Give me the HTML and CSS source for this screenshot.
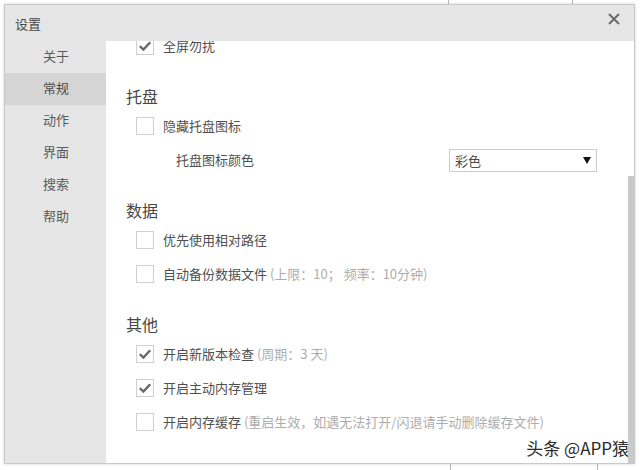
FILE: index.html
```html
<!DOCTYPE html>
<html lang="zh-CN">
<head>
<meta charset="utf-8">
<title>设置</title>
<link rel="stylesheet" href="styles.css">
</head>
<body>
<div class="desk-line desk-line-t1"></div>
<div class="desk-line desk-line-t2"></div>
<div class="desk-line desk-line-b1"></div>
<div class="desk-line desk-line-b2"></div>
<div class="window">
  <div class="titlebar">
    <span class="title">设置</span>
    <svg class="close" width="12" height="12" viewBox="0 0 12 12"><path d="M1 1 L11 11 M11 1 L1 11" stroke="#6a6a6a" stroke-width="2" fill="none"/></svg>
  </div>
  <div class="main">
    <ul class="sidebar">
      <li class="nav-item">关于</li>
      <li class="nav-item active">常规</li>
      <li class="nav-item">动作</li>
      <li class="nav-item">界面</li>
      <li class="nav-item">搜索</li>
      <li class="nav-item">帮助</li>
    </ul>
    <div class="content">
      <div class="scroller">
        <div class="row">
          <span class="cb checked"><svg viewBox="0 0 18 18" width="18" height="18"><path d="M3.8 9.2 L7.4 12.6 L14.2 5.2" stroke="#686868" stroke-width="2.4" fill="none"/></svg></span>
          <span class="label">全屏勿扰</span>
        </div>

        <h3 class="section">托盘</h3>
        <div class="row">
          <span class="cb"></span>
          <span class="label">隐藏托盘图标</span>
        </div>
        <div class="row sub-row">
          <span class="label sub-label">托盘图标颜色</span>
          <div class="select"><span>彩色</span><i class="arrow"></i></div>
        </div>

        <h3 class="section">数据</h3>
        <div class="row">
          <span class="cb"></span>
          <span class="label">优先使用相对路径</span>
        </div>
        <div class="row">
          <span class="cb"></span>
          <span class="label">自动备份数据文件 <em class="hint">(上限：10；&nbsp;频率：10分钟)</em></span>
        </div>

        <h3 class="section">其他</h3>
        <div class="row">
          <span class="cb checked"><svg viewBox="0 0 18 18" width="18" height="18"><path d="M3.8 9.2 L7.4 12.6 L14.2 5.2" stroke="#686868" stroke-width="2.4" fill="none"/></svg></span>
          <span class="label">开启新版本检查 <em class="hint">(周期：3 天)</em></span>
        </div>
        <div class="row">
          <span class="cb checked"><svg viewBox="0 0 18 18" width="18" height="18"><path d="M3.8 9.2 L7.4 12.6 L14.2 5.2" stroke="#686868" stroke-width="2.4" fill="none"/></svg></span>
          <span class="label">开启主动内存管理</span>
        </div>
        <div class="row">
          <span class="cb"></span>
          <span class="label">开启内存缓存 <em class="hint">(重启生效，如遇无法打开/闪退请手动删除缓存文件)</em></span>
        </div>
      </div>
      <div class="thumb"></div>
    </div>
  </div>
  <div class="watermark">头条 @APP猿</div>
</div>
</body>
</html>
```

FILE: styles.css
```css
* { box-sizing: border-box; }
html, body {
  margin: 0;
  padding: 0;
  background: #ffffff;
  width: 640px;
  height: 470px;
  overflow: hidden;
  font-family: "Noto Sans CJK SC", "Noto Sans", "Liberation Sans", sans-serif;
  position: relative;
}

.desk-line {
  position: absolute;
  width: 1px;
  background: #b8b8b8;
}
.desk-line-t1 { left: 448px; top: 0; height: 5px; }
.desk-line-t2 { left: 572px; top: 0; height: 5px; }
.desk-line-b1 { left: 450px; top: 463px; height: 7px; }
.desk-line-b2 { left: 597px; top: 463px; height: 7px; }

.window {
  position: absolute;
  left: 4px;
  top: 4px;
  width: 631px;
  height: 460px;
  border: 1px solid #c9c9c9;
  box-shadow: 0 0 3px rgba(0,0,0,0.18);
  background: #ffffff;
  display: flex;
  flex-direction: column;
}

.titlebar {
  height: 36px;
  flex: none;
  background: #e6e6e6;
  display: flex;
  align-items: center;
  justify-content: space-between;
  padding: 0 14px 0 10px;
}
.title {
  font-size: 13px;
  line-height: 16px;
  color: #4a4a4a;
  margin-top: 1px;
}
.close {
  display: block;
  margin-top: -8px;
}

.main {
  flex: 1;
  display: flex;
  min-height: 0;
}

.sidebar {
  list-style: none;
  margin: 0;
  padding: 0;
  width: 101px;
  flex: none;
  background: #e6e6e6;
}
.nav-item {
  height: 32px;
  display: flex;
  align-items: center;
  justify-content: center;
  font-size: 13px;
  line-height: 16px;
  color: #5a5a5a;
  padding-left: 1px;
  padding-bottom: 2px;
}
.nav-item.active {
  background: #d5d5d5;
  color: #4a4a4a;
}

.content {
  flex: 1;
  position: relative;
  overflow: hidden;
  background: #fff;
}
.scroller {
  margin-top: -12px;
  padding-left: 30px;
}

.row {
  height: 34px;
  display: flex;
  align-items: center;
  font-size: 13px;
  color: #505050;
}
.cb {
  width: 18px;
  height: 18px;
  flex: none;
  border: 1px solid #cfcfcf;
  background: #fff;
  position: relative;
  margin-right: 9px;
}
.cb svg {
  position: absolute;
  left: -1px;
  top: -1px;
}
.label {
  line-height: 18px;
  white-space: nowrap;
}
.hint {
  font-style: normal;
  color: #adadad;
}

.sub-row {
  padding-left: 40px;
}
.sub-label {
  width: 273px;
}
.select {
  width: 148px;
  height: 23px;
  border: 1px solid #cccccc;
  display: flex;
  align-items: center;
  justify-content: space-between;
  padding: 0 5px 0 5px;
  font-size: 13px;
  color: #4a4a4a;
  margin-top: 1px;
}
.arrow {
  width: 0;
  height: 0;
  border-left: 4px solid transparent;
  border-right: 4px solid transparent;
  border-top: 7px solid #111;
}

.section {
  margin: 21px 0 1px -10px;
  height: 24px;
  line-height: 24px;
  font-size: 16px;
  font-weight: normal;
  color: #474747;
}

.thumb {
  position: absolute;
  right: 0;
  width: 6px;
  top: 135px;
  bottom: 0;
  background: #c9c9c9;
}

.watermark {
  position: absolute;
  right: 5px;
  bottom: 4px;
  font-size: 17px;
  line-height: 22px;
  color: #2a2a2a;
  text-shadow: 0 0 2px #fff;
}
```
